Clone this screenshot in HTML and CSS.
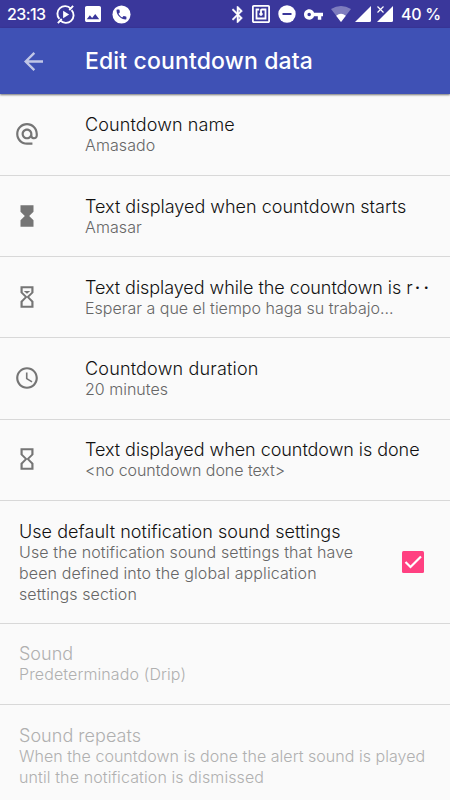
FILE: index.html
```
<!DOCTYPE html>
<html lang="en">
<head>
<meta charset="utf-8">
<title>Edit countdown data</title>
<link rel="stylesheet" href="styles.css">
</head>
<body>
<div class="status">
  <span class="clock">23:13</span>
  <svg class="s-sync" viewBox="0 0 20 20"><path d="M15.500 3.800A8 8 0 0 0 3.600 14.700M4.500 16.200A8 8 0 0 0 16.400 5.300M14 5.500L18 1M6 14.500L2 19" fill="none" stroke="#fff" stroke-width="2"/><path d="M7.500 6v8l6.300-4z" fill="#fff"/></svg>
  <svg class="s-image" viewBox="3 3 18 18"><path fill="#fff" d="M21 19V5c0-1.100-.9-2-2-2H5c-1.100 0-2 .9-2 2v14c0 1.100.9 2 2 2h14c1.100 0 2-.9 2-2zM8.500 13.500l2.500 3.010L14.500 12l4.500 6H5l3.500-4.500z"/></svg>
  <svg class="s-phone" viewBox="0 0 20 20"><circle cx="10" cy="10" r="9.500" fill="#fff"/><path transform="translate(3 3) scale(.58)" fill="#3a379b" d="M6.620 10.790c1.440 2.830 3.760 5.140 6.590 6.590l2.200-2.200c.27-.27.67-.36 1.020-.24 1.120.37 2.330.57 3.570.57.55 0 1 .45 1 1V20c0 .55-.45 1-1 1-9.390 0-17-7.610-17-17 0-.55.45-1 1-1h3.500c.55 0 1 .45 1 1 0 1.250.2 2.450.57 3.570.11.35.03.74-.25 1.020l-2.200 2.200z"/></svg>
  <span class="spacer"></span>
  <svg class="s-bt" viewBox="5 2 14.500 20"><path fill="#fff" stroke="#fff" stroke-width=".5" d="M17.710 7.710L12 2h-1v7.590L6.410 5 5 6.410 10.590 12 5 17.590 6.410 19 11 14.410V22h1l5.710-5.710-4.300-4.290 4.300-4.290zM13 5.830l1.880 1.880L13 9.590V5.830zm1.880 10.460L13 18.170v-3.760l1.880 1.880z"/></svg>
  <svg class="s-nfc" viewBox="2 2 20 20"><path fill="#fff" d="M20 2H4c-1.100 0-2 .9-2 2v16c0 1.100.9 2 2 2h16c1.100 0 2-.9 2-2V4c0-1.100-.9-2-2-2zm0 18H4V4h16v16zM18 6h-5c-1.100 0-2 .9-2 2v2.280c-.6.350-1 .980-1 1.720 0 1.100.9 2 2 2s2-.9 2-2c0-.740-.4-1.380-1-1.720V8h3v8H8V8h2V6H6v12h12V6z"/></svg>
  <svg class="s-dnd" viewBox="0 0 18 18"><circle cx="9" cy="9" r="8.700" fill="#fff"/><path d="M4.500 9h9" stroke="#3a379b" stroke-width="2"/></svg>
  <svg class="s-key" viewBox="1 6 22 12"><path fill="#fff" d="M12.650 10C11.830 7.670 9.610 6 7 6c-3.310 0-6 2.690-6 6s2.690 6 6 6c2.610 0 4.830-1.670 5.650-4H17v4h4v-4h2v-4H12.650zM7 14c-1.100 0-2-.9-2-2s.9-2 2-2 2 .9 2 2-.9 2-2 2z"/></svg>
  <svg class="s-wifi" viewBox="0 0 20 16"><path d="M0 3Q10-3 20 3L10 16z" fill="#fff" opacity=".35"/><path d="M5.200 9.700Q10 6 14.800 9.700L10 16z" fill="#fff"/></svg>
  <svg class="s-sig" viewBox="0 0 16 16"><path d="M0 16L16 0v14.500Q16 16 14.500 16z" fill="#fff"/></svg>
  <svg class="s-sigx" viewBox="0 0 16 16"><path d="M0 16L16 0v14.500Q16 16 14.500 16z" fill="#fff"/><path d="M.5.500l6 6M6.500.500l-6 6" stroke="#3a379b" stroke-width="2.600"/><path d="M.5.500l6 6M6.500.500l-6 6" stroke="#fff" stroke-width="1.200"/></svg>
  <span class="battery">40 %</span>
</div>
<header class="bar">
  <svg class="back" viewBox="4 4 16 16"><path fill="#fff" fill-opacity=".68" d="M20 11H7.830l5.590-5.590L12 4l-8 8 8 8 1.410-1.410L7.830 13H20v-2z"/></svg>
  <h1>Edit countdown data</h1>
</header>
<main>
  <section class="row">
    <svg class="icon" viewBox="0 0 24 24"><path d="M12 1.950c-5.520 0-10 4.480-10 10s4.480 10 10 10h5v-2h-5c-4.340 0-8-3.660-8-8s3.660-8 8-8 8 3.660 8 8v1.430c0 .790-.710 1.570-1.500 1.570s-1.500-.780-1.500-1.570v-1.430c0-2.760-2.240-5-5-5s-5 2.240-5 5 2.240 5 5 5c1.380 0 2.640-.560 3.540-1.470.650.890 1.770 1.470 2.960 1.470 1.970 0 3.500-1.600 3.500-3.570v-1.430c0-5.520-4.480-10-10-10zm0 13c-1.660 0-3-1.340-3-3s1.340-3 3-3 3 1.340 3 3-1.340 3-3 3z"/></svg>
    <div class="text"><h2 class="loose">Countdown name</h2><p class="loose">Amasado</p></div>
  </section>
  <section class="row">
    <svg class="icon" viewBox="0 0 24 24"><path d="M6 2v6h.010L6 8.010 10 12l-4 4 .010.010H6V22h12v-5.990h-.010L18 16l-4-4 4-3.990-.010-.010H18V2z"/></svg>
    <div class="text"><h2>Text displayed when countdown starts</h2><p class="loose">Amasar</p></div>
  </section>
  <section class="row">
    <svg class="icon" viewBox="0 0 24 24"><path d="M6 2v6l4 4-4 4v6h12v-6l-4-4 4-4V2zm10 14.500V20H8v-3.500l4-4zM12 11.500l-4-4V4h8v3.500z"/><path d="M9 6.500h6l-3 2.500z"/></svg>
    <div class="text"><h2 class="tight">Text displayed while the countdown is r<span class="dots">··</span></h2><p>Esperar a que el tiempo haga su trabajo...</p></div>
  </section>
  <section class="row">
    <svg class="icon" viewBox="0 0 24 24"><path d="M11.990 2C6.470 2 2 6.480 2 12s4.470 10 9.990 10C17.520 22 22 17.520 22 12S17.520 2 11.990 2zM12 20c-4.420 0-8-3.580-8-8s3.580-8 8-8 8 3.580 8 8-3.580 8-8 8zm.5-13H11v6l5.250 3.150.750-1.230-4.500-2.670z"/></svg>
    <div class="text"><h2 class="looser">Countdown duration</h2><p>20 minutes</p></div>
  </section>
  <section class="row">
    <svg class="icon" viewBox="0 0 24 24"><path d="M6 2v6l4 4-4 4v6h12v-6l-4-4 4-4V2zm10 14.500V20H8v-3.500l4-4zM12 11.500l-4-4V4h8v3.500z"/></svg>
    <div class="text"><h2 class="tight">Text displayed when countdown is done</h2><p class="tight">&lt;no countdown done text&gt;</p></div>
  </section>
  <section class="row wide tall">
    <div class="text"><h2 class="slight">Use default notification sound settings</h2><p class="loose">Use the notification sound settings that have<br>been defined into the global application<br>settings section</p></div>
    <svg class="check" viewBox="0 0 22 22"><rect width="22" height="22" rx="1.500" fill="#ff4081"/><path d="M3.500 11l5 5L19 5.500" fill="none" stroke="#fff" stroke-width="2.200"/></svg>
  </section>
  <section class="row wide off">
    <div class="text"><h2>Sound</h2><p class="loose">Predeterminado (Drip)</p></div>
  </section>
  <section class="row wide off last">
    <div class="text"><h2 class="slight">Sound repeats</h2><p class="slight">When the countdown is done the alert sound is played<br><span class="loose">until the notification is dismissed</span></p></div>
  </section>
</main>
</body>
</html>
```
FILE: styles.css
```
* { box-sizing: border-box; }
body { margin: 0; width: 450px; height: 800px; overflow: hidden; background: #fafafa; font-family: Inter, sans-serif; color: #111; }
svg { display: block; flex: none; }
.status { height: 28px; background: #3a379b; display: flex; align-items: center; padding: 0 10px 0 7px; color: #fff; font-size: 16px; font-weight: 500; letter-spacing: -.6px; white-space: nowrap; }
.clock { width: 39px; }
.s-sync { width: 19px; height: 19px; margin-left: 10px; }
.s-image { width: 16px; height: 16px; margin-left: 10px; }
.s-phone { width: 19px; height: 19px; margin-left: 11px; }
.spacer { flex: 1; }
.s-bt { width: 12px; height: 17px; }
.s-nfc { width: 18px; height: 18px; margin-left: 8px; }
.s-dnd { width: 18px; height: 18px; margin-left: 8px; }
.s-key { width: 19px; height: 11px; margin-left: 8px; }
.s-wifi { width: 20px; height: 16px; margin-left: 8px; }
.s-sig { width: 16px; height: 16px; margin-left: 4px; }
.s-sigx { width: 16px; height: 16px; margin-left: 6px; }
.battery { width: 39px; margin-left: 8px; letter-spacing: -.3px; }
.bar { height: 66px; background: #3f51b5; display: flex; align-items: center; padding-left: 24px; color: #fff; box-shadow: 0 1px 2px rgba(0,0,0,.55); position: relative; }
.back { width: 19px; height: 19px; }
h1 { margin: 0 0 0 42px; font-size: 23px; font-weight: 500; line-height: 30px; letter-spacing: .14px; white-space: nowrap; }
main { padding-top: .6px; }
.row { height: 81.250px; border-bottom: 1px solid #d8d8d8; padding: 19.700px 0 0 14px; display: flex; }
.icon { width: 26px; height: 26px; fill: #757575; margin-top: 7px; }
.text { margin-left: 45px; white-space: nowrap; }
h2 { margin: 0; font-size: 18px; line-height: 21px; font-weight: 300; }
p { margin: 0; font-size: 16px; line-height: 21px; font-weight: 300; color: #666; }
.loose { letter-spacing: .11px; }
.looser { letter-spacing: .18px; }
.slight { letter-spacing: .04px; }
.tight { letter-spacing: -.05px; }
.dots { margin-left: 2px; font-weight: 500; letter-spacing: 3.500px; }
.wide { padding-left: 19px; }
.wide .text { margin-left: 0; width: 382.500px; }
.tall { height: 122.750px; }
.check { width: 22px; height: 22px; margin-top: 30px; }
.off h2, .off p { color: #b0b0b0; }
.last { border: 0; height: 96px; }
```
